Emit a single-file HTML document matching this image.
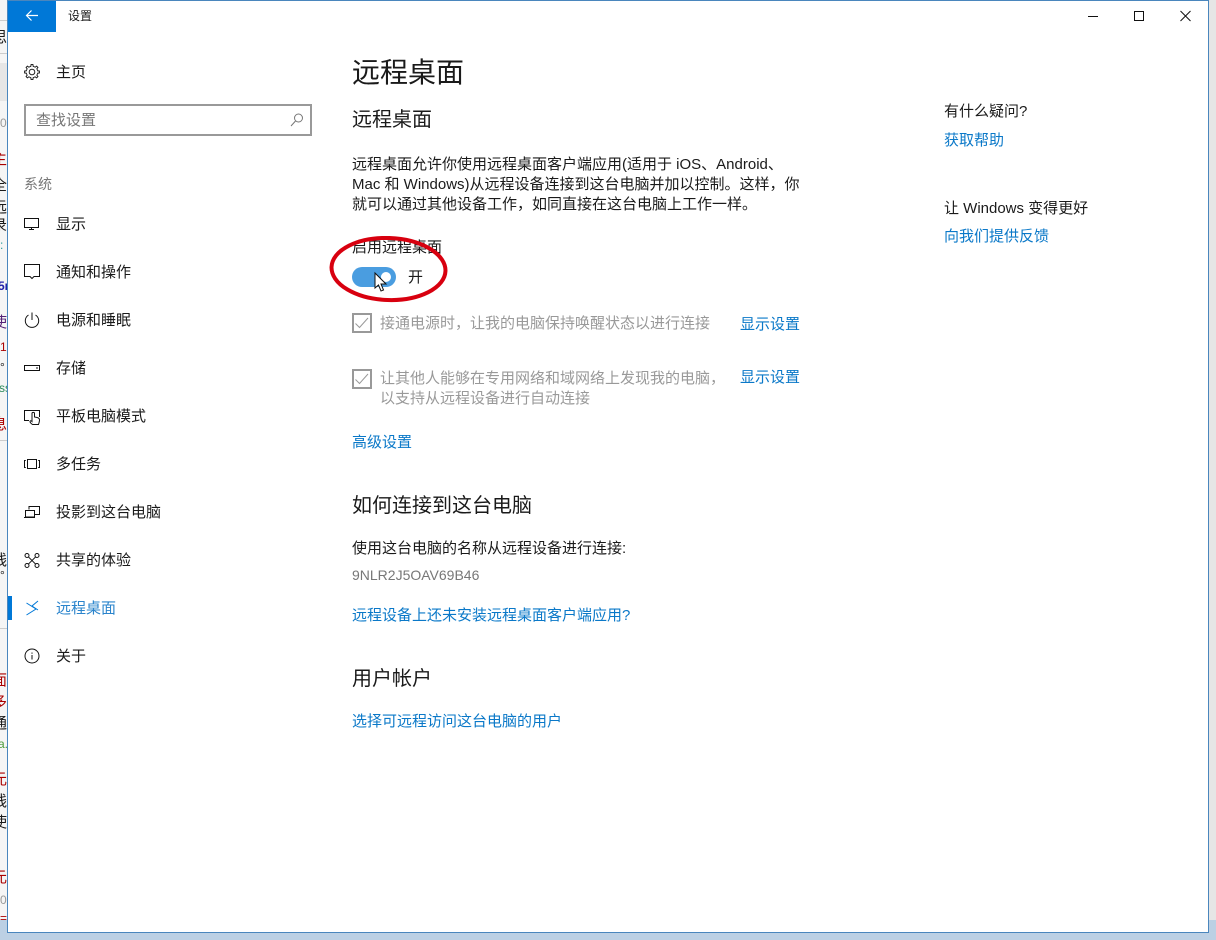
<!DOCTYPE html>
<html lang="zh-CN"><head><meta charset="utf-8"><title>设置</title>
<style>
html,body{margin:0;padding:0}
body{width:1216px;height:940px;overflow:hidden;position:relative;background:#e6e6e6;font-family:"Liberation Sans","Noto Sans CJK SC",sans-serif;color:#1a1a1a;font-size:15px}
.t{position:absolute;white-space:nowrap;line-height:20px}
.g{color:#999}.b{color:#0a78c8}
#win{position:absolute;left:7px;top:0;width:1200px;height:931px;background:#fff;border:1px solid #4a86bd}
svg{position:absolute;overflow:visible}
#side{position:absolute;left:0;top:0;width:7px;height:920px;background:#f5f5f5;overflow:hidden}
.s{position:absolute;white-space:nowrap;line-height:16px;font-size:15px;left:-8px}
.n{position:absolute;white-space:nowrap;line-height:14px;font-size:12px;left:0}
.r{color:#a00}
.l{position:absolute;left:0;width:7px;height:1px;background:#ccc}
</style></head><body>
<div style="position:absolute;left:0;top:920px;width:1216px;height:20px;background:#bcd0e4"></div>
<div id="side">
<div class="l" style="top:20px"></div><div class="l" style="top:53px"></div>
<div style="position:absolute;left:0;top:63px;width:7px;height:38px;background:#e6e6e6"></div>
<div class="l" style="top:440px"></div><div class="l" style="top:628px"></div>
<div class="s" style="top:30px">思</div>
<div class="n" style="top:116px;color:#999">0</div>
<div class="s r" style="top:152px">主</div>
<div class="s" style="top:178px">全</div>
<div class="s" style="top:200px">远</div>
<div class="s" style="top:218px">录</div>
<div class="n" style="top:238px;color:#2a9a9a">:</div>
<div class="n" style="top:279px;left:-2px;color:#22a;font-weight:bold">5m</div>
<div class="s" style="top:315px;color:#527">使</div>
<div class="n r" style="top:340px">1</div>
<div class="n" style="top:360px">°</div>
<div class="n" style="top:381px;left:-1px;color:#2a8a5a">ss</div>
<div class="s r" style="top:417px">息</div>
<div class="s" style="top:553px">线</div>
<div class="n" style="top:568px">°</div>
<div class="s r" style="top:673px">面</div>
<div class="s r" style="top:695px">多</div>
<div class="s" style="top:716px">通</div>
<div class="n" style="top:737px;left:-2px;color:#4a9a3a">a.</div>
<div class="s r" style="top:772px">元</div>
<div class="s" style="top:794px">线</div>
<div class="s" style="top:815px">使</div>
<div class="s r" style="top:870px">元</div>
<div class="n" style="top:893px;color:#999">0</div>
<div class="n r" style="top:911px">=</div>
</div>
<div id="win"></div>

<div style="position:absolute;left:8px;top:1px;width:48px;height:31px;background:#0078d7"></div>
<svg style="left:8px;top:1px" width="48" height="31" fill="none" stroke="#fff" stroke-width="1.2"><path d="M18.5 14.500H30M23.500 9.500l-5 5 5 5"/></svg>
<div class="t" style="left:68px;top:6px;font-size:12px">设置</div>
<svg style="left:1080px;top:0" width="136" height="32" fill="none" stroke="#111" stroke-width="1"><path d="M8 16.500h10"/><rect x="54.500" y="11.500" width="9" height="9"/><path d="M100.500 11l10 10M110.500 11l-10 10"/></svg>

<svg style="left:24px;top:64px" width="16" height="16" fill="none" stroke="#222" stroke-width="1"><defs><path id="tooth" d="M-2.220-5.360L-1.200-5.670-.91-7.440H.91L1.200-5.670 2.220-5.360"/></defs><circle cx="8" cy="8" r="2.800"/><use href="#tooth" transform="translate(8 8)"/><use href="#tooth" transform="translate(8 8) rotate(45)"/><use href="#tooth" transform="translate(8 8) rotate(90)"/><use href="#tooth" transform="translate(8 8) rotate(135)"/><use href="#tooth" transform="translate(8 8) rotate(180)"/><use href="#tooth" transform="translate(8 8) rotate(225)"/><use href="#tooth" transform="translate(8 8) rotate(270)"/><use href="#tooth" transform="translate(8 8) rotate(315)"/></svg>
<div class="t" style="left:56px;top:63px">主页</div>
<div style="position:absolute;left:24px;top:104px;width:284px;height:28px;border:2px solid #999"></div>
<div class="t" style="left:36px;top:111px;color:#777">查找设置</div>
<svg style="left:290px;top:113px" width="14" height="14" fill="none" stroke="#777" stroke-width="1"><circle cx="8.500" cy="5" r="4"/><path d="M5.500 8L1 13"/></svg>
<div class="t" style="left:24px;top:174px;font-size:14px;color:#777">系统</div>

<svg style="left:24px;top:218px" width="16" height="12" fill="none" stroke="#111" stroke-width="1"><rect x=".5" y=".5" width="14" height="9"/><path d="M7.500 10v1.500M5 11.500h5"/></svg>
<div class="t" style="left:56px;top:215px">显示</div>
<svg style="left:24px;top:264px" width="16" height="16" fill="none" stroke="#111" stroke-width="1"><path d="M.5.5h15v12H10l-2 2-2-2H.5z"/></svg>
<div class="t" style="left:56px;top:263px">通知和操作</div>
<svg style="left:24px;top:312px" width="16" height="16" fill="none" stroke="#111" stroke-width="1"><path d="M4.500 3A6.700 6.700 0 1 0 11.500 3M8 .5V8"/></svg>
<div class="t" style="left:56px;top:311px">电源和睡眠</div>
<svg style="left:24px;top:364px" width="16" height="9" fill="none" stroke="#111" stroke-width="1"><rect x=".5" y="1.500" width="15" height="5"/><path d="M12 4h2"/></svg>
<div class="t" style="left:56px;top:359px">存储</div>
<svg style="left:24px;top:409px" width="16" height="16" fill="none" stroke="#111" stroke-width="1"><path d="M5 11.500H.5v-10h15V8"/><path d="M8.500 15.500c-1.500-1-2.500-2-2.500-3s1-1 2 0V4.500c0-1.500 2.500-1.500 2.500 0V8l2.500.5c1.500.3 2.500 1 2.500 2.500 0 1.500-.5 3-1 4.500z" fill="#fff"/></svg>
<div class="t" style="left:56px;top:407px">平板电脑模式</div>
<svg style="left:24px;top:459px" width="16" height="11" fill="none" stroke="#111" stroke-width="1"><rect x="3.500" y=".5" width="9" height="9"/><path d="M1.800 1.500H.5v7h1.300M14.200 1.500h1.300v7h-1.300"/></svg>
<div class="t" style="left:56px;top:455px">多任务</div>
<svg style="left:24px;top:506px" width="16" height="13" fill="none" stroke="#111" stroke-width="1"><path d="M5 3.500V.5h10.500v8H11"/><rect x="1.500" y="4.500" width="9" height="6.500" fill="#fff"/><path d="M0 11.500h11"/></svg>
<div class="t" style="left:56px;top:503px">投影到这台电脑</div>
<svg style="left:24px;top:553px" width="16" height="15" fill="none" stroke="#111" stroke-width="1"><circle cx="3" cy="2.500" r="2"/><circle cx="13" cy="2.500" r="2"/><circle cx="3" cy="12.500" r="2"/><circle cx="13" cy="12.500" r="2"/><path d="M4.300 3.800l7.400 7.400M11.700 3.800l-7.400 7.400"/></svg>
<div class="t" style="left:56px;top:551px">共享的体验</div>
<div style="position:absolute;left:8px;top:596px;width:4px;height:24px;background:#0078d7"></div>
<svg style="left:26px;top:600px" width="13" height="16" fill="none" stroke="#0078d7" stroke-width="1"><path d="M.5 3L10 9 .5 15M12 1L6 6l6 4"/></svg>
<div class="t" style="left:56px;top:599px;color:#2a84cc">远程桌面</div>
<svg style="left:24px;top:648px" width="16" height="16" fill="none" stroke="#111" stroke-width="1"><circle cx="8" cy="8" r="7"/><path d="M8 7v4.500M8 4.500v1.200"/></svg>
<div class="t" style="left:56px;top:647px">关于</div>

<div class="t" style="left:352px;top:54px;font-size:28px;line-height:38px">远程桌面</div>
<div class="t" style="left:352px;top:106px;font-size:20px;line-height:28px">远程桌面</div>
<div class="t" style="left:352px;top:155px;width:450px;font-size:15px">远程桌面允许你使用远程桌面客户端应用(适用于 iOS、Android、<br>Mac 和 Windows)从远程设备连接到这台电脑并加以控制。这样，你<br>就可以通过其他设备工作，如同直接在这台电脑上工作一样。</div>
<div class="t" style="left:352px;top:238px">启用远程桌面</div>
<div style="position:absolute;left:352px;top:267px;width:44px;height:20px;border-radius:10px;background:#4a9de0"></div>
<div style="position:absolute;left:381px;top:272px;width:10px;height:10px;border-radius:50%;background:#fff"></div>
<div class="t" style="left:408px;top:268px">开</div>
<svg style="left:328px;top:234px" width="122" height="70" fill="none"><ellipse cx="60.500" cy="35" rx="57" ry="31" stroke="#d8000f" stroke-width="4" transform="rotate(2 60 35)"/></svg>
<svg style="left:374px;top:272px" width="14" height="20"><path d="M1 1v15l3.500-3 2.500 6 2.500-1-2.500-6h5z" fill="#fff" stroke="#111" stroke-width="1"/></svg>

<div style="position:absolute;left:352px;top:313px;width:16px;height:16px;border:2px solid #999"></div>
<svg style="left:354px;top:315px" width="16" height="16" fill="none" stroke="#999" stroke-width="1"><path d="M1.500 8.500l4 4L14 3"/></svg>
<div class="t g" style="left:380px;top:314px">接通电源时，让我的电脑保持唤醒状态以进行连接</div>
<div class="t b" style="left:740px;top:315px">显示设置</div>
<div style="position:absolute;left:352px;top:369px;width:16px;height:16px;border:2px solid #999"></div>
<svg style="left:354px;top:371px" width="16" height="16" fill="none" stroke="#999" stroke-width="1"><path d="M1.500 8.500l4 4L14 3"/></svg>
<div class="t g" style="left:380px;top:369px">让其他人能够在专用网络和域网络上发现我的电脑，<br>以支持从远程设备进行自动连接</div>
<div class="t b" style="left:740px;top:368px">显示设置</div>
<div class="t b" style="left:352px;top:433px">高级设置</div>

<div class="t" style="left:352px;top:492px;font-size:20px;line-height:28px">如何连接到这台电脑</div>
<div class="t" style="left:352px;top:539px;font-size:15px">使用这台电脑的名称从远程设备进行连接:</div>
<div class="t" style="left:352px;top:565px;color:#777;font-size:14px">9NLR2J5OAV69B46</div>
<div class="t b" style="left:352px;top:606px">远程设备上还未安装远程桌面客户端应用?</div>
<div class="t" style="left:352px;top:665px;font-size:20px;line-height:28px">用户帐户</div>
<div class="t b" style="left:352px;top:712px">选择可远程访问这台电脑的用户</div>

<div class="t" style="left:944px;top:102px;font-size:15px">有什么疑问?</div>
<div class="t b" style="left:944px;top:131px">获取帮助</div>
<div class="t" style="left:944px;top:199px;font-size:15px">让 Windows 变得更好</div>
<div class="t b" style="left:944px;top:227px">向我们提供反馈</div>
</body></html>
